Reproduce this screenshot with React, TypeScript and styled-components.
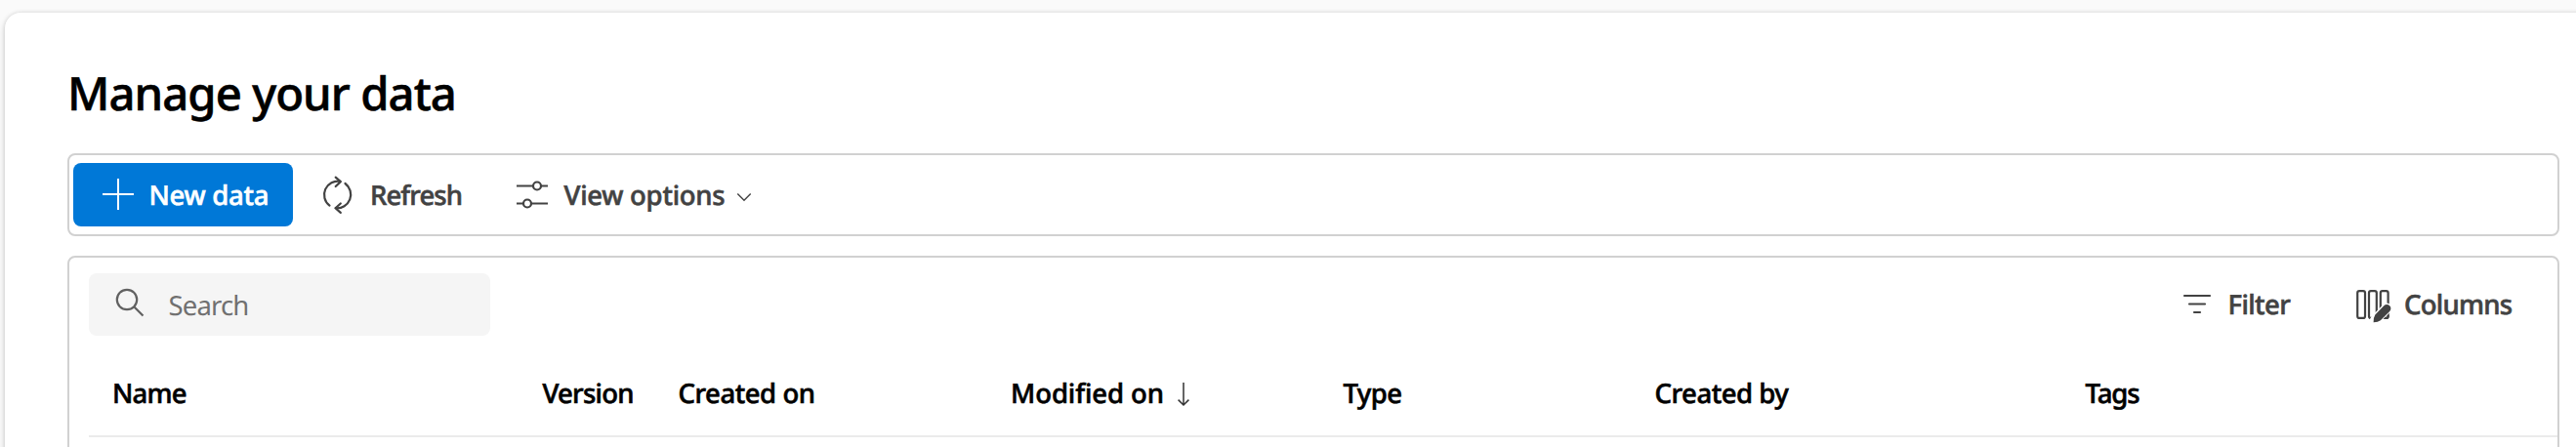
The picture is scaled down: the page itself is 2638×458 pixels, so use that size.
import React from "react";
import styled, { createGlobalStyle } from "styled-components";

const Global = createGlobalStyle`
  * { box-sizing: border-box; }
  html, body { margin: 0; height: 100%; overflow: hidden; background: #fafafa; }
  body {
    font-family: "Noto Sans", "Open Sans", sans-serif;
    font-size: 27.5px;
    text-rendering: geometricPrecision;
  }
`;

const Page = styled.div`
  width: 2638px;
  height: 458px;
  padding: 13px 0 0 5px;
  overflow: hidden;
  background: #fafafa;
`;

const Card = styled.main`
  height: 520px;
  width: 2660px;
  padding: 0 44px 0 64px;
  border-radius: 16px 0 0 0;
  background: #fff;
  box-shadow: 0 0 4px rgba(0, 0, 0, 0.14), 0 4px 8px rgba(0, 0, 0, 0.12);
`;

const Title = styled.h1`
  margin: 0;
  height: 144px;
  padding-top: 50px;
  font-size: 47.25px;
  line-height: 64px;
  font-weight: 500;
  color: #000;
  -webkit-text-stroke: 0.6px currentColor;
`;

const Label = styled.span<{ $spacing?: number }>`
  letter-spacing: ${(p) => p.$spacing ?? 0}px;
  white-space: nowrap;
`;

const Toolbar = styled.div`
  display: flex;
  align-items: center;
  width: 2552px;
  height: 85px;
  padding: 0 4px;
  border: 2px solid #d1d1d1;
  border-radius: 8px;
`;

const CommandButton = styled.button<{ $width: number; $primary?: boolean; $pad: number; $gap: number }>`
  display: flex;
  align-items: center;
  flex: none;
  width: ${(p) => p.$width}px;
  height: 65px;
  padding: 0 0 0 ${(p) => p.$pad}px;
  gap: ${(p) => p.$gap}px;
  border: 0;
  border-radius: 8px;
  font: inherit;
  font-weight: 500;
  line-height: 40px;
  text-rendering: inherit;
  color: ${(p) => (p.$primary ? "#fff" : "#424242")};
  background: ${(p) => (p.$primary ? "#0078d7" : "transparent")};

  ${Label} {
    padding-top: 2px;
    -webkit-text-stroke: 0.6px currentColor;
  }
`;

const Icon = styled.svg`
  display: block;
  flex: none;
  overflow: visible;
  fill: none;
  stroke: currentColor;
  stroke-width: 2.2;
`;

const PlusIcon = styled(Icon)`
  margin-bottom: 1px;
  stroke-width: 2;
`;

const ChevronIcon = styled(Icon)`
  margin: 5px 0 0 -4px;
  stroke-width: 1.4;
`;

const SearchIcon = styled(Icon)`
  margin-bottom: 4px;
  color: #616161;
`;

const SortIcon = styled(Icon)`
  margin-top: 1px;
  color: #333;
  stroke-width: 1.5;
`;

const Panel = styled.section`
  width: 2552px;
  height: 240px;
  margin-top: 20px;
  padding: 16px 0 0 20px;
  border: 2px solid #d1d1d1;
  border-radius: 8px;
`;

const PanelBar = styled.div`
  display: flex;
  align-items: center;
  justify-content: space-between;
  height: 64px;
`;

const SearchBox = styled.div`
  display: flex;
  align-items: center;
  gap: 24.5px;
  width: 411px;
  height: 64px;
  padding-left: 27px;
  border-radius: 8px;
  background: #f5f5f5;
  color: #707070;

  ${Label} {
    padding-top: 2px;
  }
`;

const PanelActions = styled.div`
  display: flex;
  width: 385px;
`;

const HeaderRow = styled.div`
  display: grid;
  grid-template-columns: 440.5px 139px 340.5px 340.5px 319px 441px 1fr;
  align-items: center;
  height: 104px;
  padding: 17px 0 0 24px;
  border-bottom: 2px solid #ebebeb;
  color: #000;
  font-weight: 500;
  -webkit-text-stroke: 0.6px currentColor;
`;

const HeaderCell = styled.div`
  display: flex;
  align-items: center;
  gap: 14px;
`;

const columns = [
  { name: "Name", spacing: -0.8 },
  { name: "Version", spacing: -0.77 },
  { name: "Created on", spacing: -0.46 },
  { name: "Modified on", spacing: -0.08, sorted: true },
  { name: "Type", spacing: -0.56 },
  { name: "Created by", spacing: -0.48 },
  { name: "Tags", spacing: -1.1 },
];

export default function App() {
  return (
    <>
      <Global />
      <Page>
        <Card>
          <Title>
            <Label $spacing={-0.94}>Manage your data</Label>
          </Title>
          <Toolbar>
            <CommandButton $primary $width={225} $pad={30} $gap={15.5}>
              <PlusIcon width="32" height="32" viewBox="0 0 32 32">
                <path d="M16 0v32M0 16h32" />
              </PlusIcon>
              <Label $spacing={-0.28}>New data</Label>
            </CommandButton>
            <CommandButton $width={198} $pad={31} $gap={16}>
              <Icon width="32" height="38" viewBox="0 0 32 38" strokeLinecap="round" strokeLinejoin="round">
                <path d="M6.500 29.700A14 14 0 0 1 17.500 4.800M22.500 7A14 14 0 0 1 12.800 32.200" />
                <path d="M12.700 .7l5.100 4.400-5.100 4.900M17.800 27.500l-5.300 4.700 5.300 4.700" />
              </Icon>
              <Label $spacing={-0.9}>Refresh</Label>
            </CommandButton>
            <CommandButton $width={290} $pad={31} $gap={16.5}>
              <Icon width="32" height="28" viewBox="0 0 32 28">
                <path d="M0 4.500h17M25 4.500h7M0 22.500h7M15 22.500h17" />
                <circle cx="21" cy="4.5" r="4" />
                <circle cx="11" cy="22.5" r="4" />
              </Icon>
              <Label $spacing={-0.27}>View options</Label>
              <ChevronIcon width="14" height="8" viewBox="0 0 14 8">
                <path d="M.3.500 7 7.200 13.700.500" />
              </ChevronIcon>
            </CommandButton>
          </Toolbar>
          <Panel>
            <PanelBar>
              <SearchBox>
                <SearchIcon width="30" height="30" viewBox="0 0 30 30">
                  <circle cx="12" cy="12" r="10.2" />
                  <path d="m19.200 19.200 9.300 9.300" />
                </SearchIcon>
                <Label $spacing={-0.85}>Search</Label>
              </SearchBox>
              <PanelActions>
                <CommandButton $width={148} $pad={2} $gap={17.5}>
                  <Icon width="28" height="20" viewBox="0 0 28 20" strokeLinecap="round">
                    <path d="M1 1h26M6 9.500h16M11 18h6" />
                  </Icon>
                  <Label $spacing={-0.6}>Filter</Label>
                </CommandButton>
                <CommandButton $width={200} $pad={31} $gap={13}>
                  <Icon width="36" height="30" viewBox="0 0 36 30" strokeLinecap="round">
                    <rect x="1.2" y="1.100" width="7.800" height="27.800" rx="2" />
                    <rect x="13" y="1.100" width="7.800" height="27.800" rx="2" />
                    <rect x="24.800" y="1.100" width="7.800" height="27.800" rx="2" />
                    <path d="M31.300 18.800 22.500 27.600 19 31.500" stroke="#fff" strokeWidth="10.500" />
                    <path d="M29.500 28.900h1.100q2 0 2-2v-1" strokeLinecap="butt" />
                    <path
                      d="M28.300 16.200a4.100 4.100 0 0 1 5.900 5.800L24.800 31.200q-2.800 2.200-7.200 2.100-.2-4.500 1.700-7.700Z"
                      fill="currentColor"
                      stroke="none"
                    />
                  </Icon>
                  <Label $spacing={-0.75}>Columns</Label>
                </CommandButton>
              </PanelActions>
            </PanelBar>
            <HeaderRow>
              {columns.map((c) => (
                <HeaderCell key={c.name}>
                  <Label $spacing={c.spacing}>{c.name}</Label>
                  {c.sorted && (
                    <SortIcon width="12" height="24" viewBox="0 0 12 24">
                      <path d="M6 0v23M.600 17.600 6 23l5.400-5.400" />
                    </SortIcon>
                  )}
                </HeaderCell>
              ))}
            </HeaderRow>
          </Panel>
        </Card>
      </Page>
    </>
  );
}
